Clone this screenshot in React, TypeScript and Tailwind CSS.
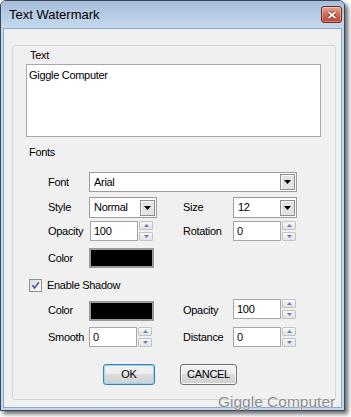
import * as React from "react"

const label = "text-[11px] leading-[13px] tracking-[-0.3px] text-black"

function DropArrow() {
  return (
    <div className="flex h-[16px] w-[15px] flex-none items-center justify-center border border-[#8e8e8e] bg-[#e3e3e3] shadow-[inset_1px_1px_0_#ffffff]">
      <svg width="7" height="4" viewBox="0 0 7 4">
        <path d="M0 0h7L3.5 4z" fill="#000" />
      </svg>
    </div>
  )
}

function Select({ value, width }: { value: string; width: string }) {
  return (
    <div className={`flex h-full items-center border border-[#9c9c9c] bg-white p-px ${width}`}>
      <span className={`${label} flex-1 pl-[3px] text-[11.5px]`}>{value}</span>
      <DropArrow />
    </div>
  )
}

function SpinBtn({ up }: { up?: boolean }) {
  return (
    <div className="flex h-[9px] w-[14px] items-center justify-center rounded-[1px] border border-[#c3c3c3] bg-gradient-to-b from-[#f7f7f7] to-[#e2e2e2]">
      <svg width="5" height="3" viewBox="0 0 5 3">
        <path d={up ? "M0 3h5L2.5 0z" : "M0 0h5L2.5 3z"} fill="#5f7fc6" />
      </svg>
    </div>
  )
}

function NumberInput({ value }: { value: string }) {
  return (
    <div className="flex h-[20px] items-center">
      <div className={`${label} h-[20px] w-[48px] border border-[#a7a7a7] bg-white pl-[3px] text-[11.5px] leading-[18px]`}>
        {value}
      </div>
      <div className="ml-[1px] flex h-[20px] flex-col justify-between">
        <SpinBtn up />
        <SpinBtn />
      </div>
    </div>
  )
}

function Swatch() {
  return <div className="h-[20px] w-[65px] border-2 border-[#9a9a9a] bg-black" />
}

function Row({
  className,
  left,
  leftLabel,
  right,
  rightLabel,
}: {
  className: string
  leftLabel: string
  left: React.ReactNode
  rightLabel?: string
  right?: React.ReactNode
}) {
  return (
    <div className={`flex items-center pl-[35px] ${className}`}>
      <span className={`${label} w-[41px] flex-none`}>{leftLabel}</span>
      <div className="flex h-full w-[94px] flex-none items-center">{left}</div>
      {rightLabel && <span className={`${label} w-[50px] flex-none`}>{rightLabel}</span>}
      {right && <div className="flex h-full items-center">{right}</div>}
    </div>
  )
}

export default function App() {
  return (
    <div className="h-[417px] w-[351px] bg-white font-['Liberation_Sans',Arial,sans-serif]">
      <div className="flex h-[411px] w-[345px] flex-col rounded-t-[6px] border border-[#3d4856] bg-[#c3d6eb] shadow-[3px_3px_4px_rgba(0,0,0,0.6)]">
        <div className="flex h-[27px] flex-none items-center justify-between rounded-t-[5px] bg-gradient-to-b from-[#a6bedb] to-[#c5d8ed] pl-[8px] pr-[2px]">
          <span className="text-[13px] text-black">Text Watermark</span>
          <div className="flex h-[17px] w-[21px] items-center justify-center rounded-[3px] border border-[#6b2b25] bg-gradient-to-b from-[#e6a895] via-[#d06a56] to-[#c1402f] shadow-[inset_0_0_0_1px_rgba(255,255,255,0.35)]">
            <svg width="10" height="8" viewBox="0 0 10 8">
              <path d="M1.5 1l7 6M8.5 1l-7 6" stroke="#5a1d18" strokeWidth="3" />
              <path d="M1.5 1l7 6M8.5 1l-7 6" stroke="#fff" strokeWidth="1.8" />
            </svg>
          </div>
        </div>

        <div className="relative mx-[2px] mb-[2px] flex-1 border border-[#8ba9cc] bg-[#f0f0f0]">
          <div className="ml-[8px] mt-[16px] flex h-[355px] w-[324px] flex-col rounded-[3px] border border-[#d5d5d5]">
            <span className={`${label} ml-[17px] mt-[3px]`}>Text</span>
            <div className={`${label} ml-[13px] mt-[2px] h-[73px] w-[295px] border border-[#a7a7a7] bg-white pl-[2px] pt-[4px] text-[11.5px]`}>
              Giggle Computer
            </div>
            <span className={`${label} ml-[16px] mt-[9px] text-[11.5px]`}>Fonts</span>

            <div className="mt-[13px] flex h-[20px] items-center pl-[35px]">
              <span className={`${label} w-[41px] flex-none`}>Font</span>
              <Select value="Arial" width="w-[208px]" />
            </div>

            <Row
              className="mt-[5px] h-[21px]"
              leftLabel="Style"
              left={<Select value="Normal" width="w-[68px]" />}
              rightLabel="Size"
              right={<Select value="12" width="w-[64px]" />}
            />

            <Row
              className="mt-[3px] h-[20px]"
              leftLabel="Opacity"
              left={
                <div className="ml-px">
                  <NumberInput value="100" />
                </div>
              }
              rightLabel="Rotation"
              right={<NumberInput value="0" />}
            />

            <Row className="mt-[7px] h-[20px]" leftLabel="Color" left={<Swatch />} />

            <div className="ml-[16px] mt-[11px] flex h-[13px] items-center gap-[5px]">
              <div className="flex h-[13px] w-[13px] items-center justify-center border border-[#8e8f8f] bg-gradient-to-br from-[#dcdcdc] to-[#ffffff]">
                <svg width="9" height="9" viewBox="0 0 9 9">
                  <path d="M1.3 4.3l2.2 2.6L7.8 1.2" stroke="#4b5d92" strokeWidth="1.7" fill="none" />
                </svg>
              </div>
              <span className={label}>Enable Shadow</span>
            </div>

            <Row
              className="mt-[7px] h-[22px]"
              leftLabel="Color"
              left={
                <div className="self-end">
                  <Swatch />
                </div>
              }
              rightLabel="Opacity"
              right={
                <div className="self-start">
                  <NumberInput value="100" />
                </div>
              }
            />

            <Row
              className="mt-[6px] h-[20px]"
              leftLabel="Smooth"
              left={<NumberInput value="0" />}
              rightLabel="Distance"
              right={<NumberInput value="0" />}
            />

            <div className="ml-[90px] mt-[17px] flex gap-[25px]">
              <div className="flex h-[21px] w-[52px] items-center justify-center rounded-[3px] border border-[#3c7fb1] bg-[linear-gradient(#f2f2f2_0%,#ebebeb_50%,#dddddd_50%,#cfcfcf_100%)] shadow-[inset_0_0_0_1px_#8fd7f5]">
                <span className={label}>OK</span>
              </div>
              <div className="flex h-[21px] w-[57px] items-center justify-center rounded-[3px] border border-[#707070] bg-[linear-gradient(#f2f2f2_0%,#ebebeb_50%,#dddddd_50%,#cfcfcf_100%)] shadow-[inset_0_0_0_1px_#fcfcfc]">
                <span className={label}>CANCEL</span>
              </div>
            </div>
          </div>

          <span className="absolute left-[214px] top-[365px] text-[15.5px] leading-none text-[#8c8c8c] [text-shadow:0_0_1px_#ffffff,0_0_1px_#ffffff]">
            Giggle Computer
          </span>
        </div>
      </div>
    </div>
  )
}
